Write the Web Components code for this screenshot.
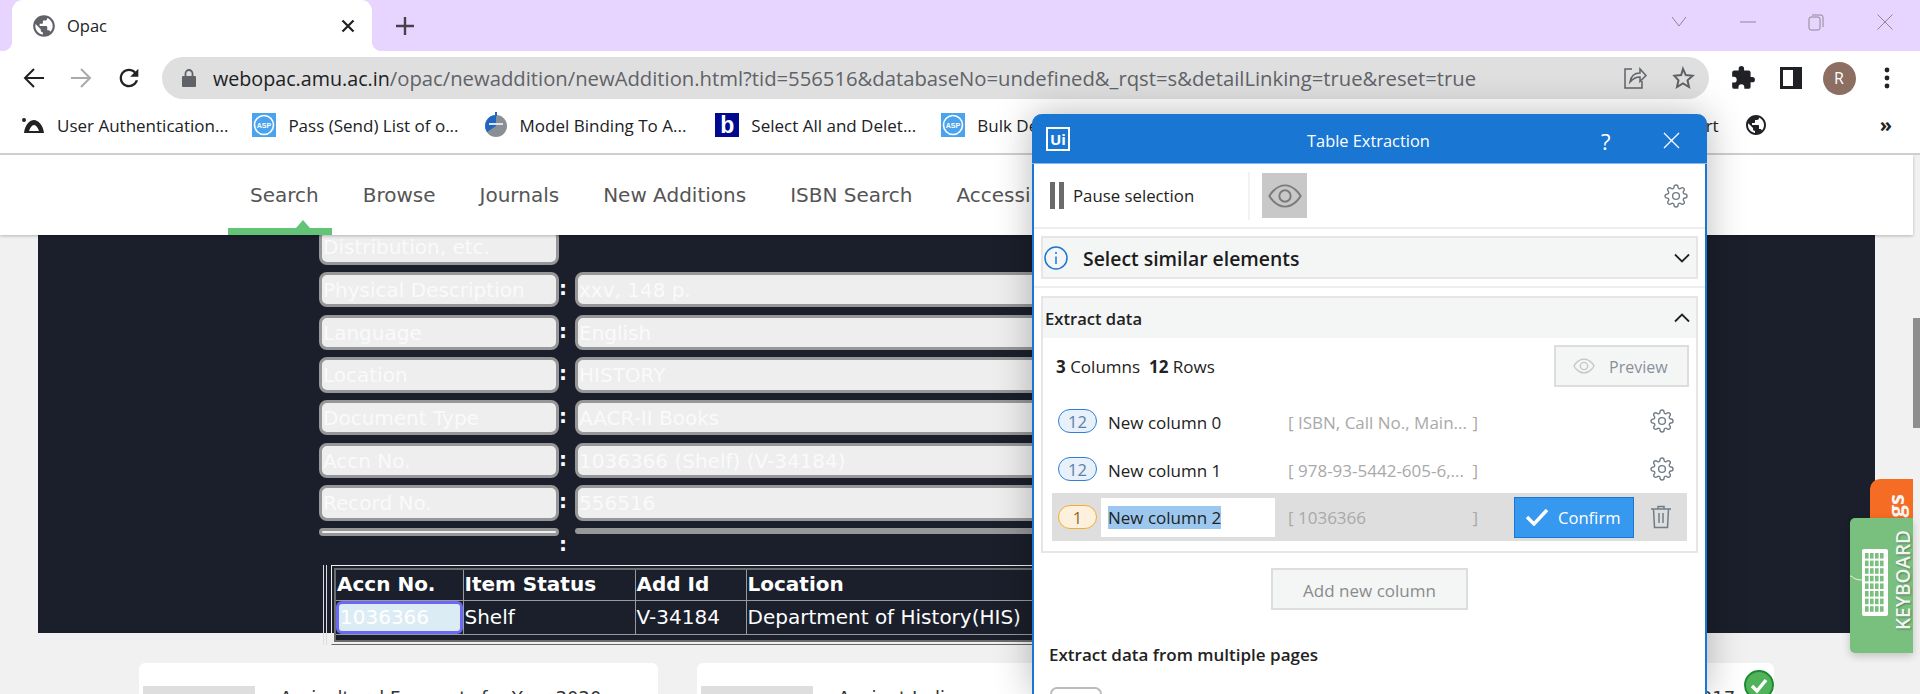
<!DOCTYPE html>
<html>
<head>
<meta charset="utf-8">
<title>Opac</title>
<style>
    html, body { margin: 0; height: 694px; overflow: hidden; background: #f1f1f1; }
    body { position: relative; font-family: "Open Sans", sans-serif; display: flex; flex-direction: column; }
</style>
</head>
<body>
<chrome-tabs></chrome-tabs>
<chrome-toolbar url-host="webopac.amu.ac.in" url-path="/opac/newaddition/newAddition.html?tid=556516&amp;databaseNo=undefined&amp;_rqst=s&amp;detailLinking=true&amp;reset=true"></chrome-toolbar>
<chrome-bookmarks></chrome-bookmarks>
<page-area>
    <site-nav></site-nav>
    <record-block>
        <record-row label="Distribution, etc." blank></record-row>
        <record-row label="Physical Description">xxv, 148 p.</record-row>
        <record-row label="Language">English</record-row>
        <record-row label="Location">HISTORY</record-row>
        <record-row label="Document Type">AACR-II Books</record-row>
        <record-row label="Accn No.">1036366 (Shelf) (V-34184)</record-row>
        <record-row label="Record No.">556516</record-row>
        <record-row thin></record-row>
        <holdings-table></holdings-table>
    </record-block>
    <card-grid>
        <book-card>Agricultural Forecasts for Year 2020</book-card>
        <book-card>Ancient India</book-card>
        <book-card checked>Modern India History &amp; Cultures 2017</book-card>
    </card-grid>
</page-area>
<side-tabs></side-tabs>
<table-extraction>
    <column-row count="12" preview="ISBN, Call No., Main...">New column 0</column-row>
    <column-row count="12" preview="978-93-5442-605-6,...">New column 1</column-row>
    <column-row count="1" preview="1036366" editing>New column 2</column-row>
</table-extraction>

<script>
const GLOBE = 'M12 2C6.48 2 2 6.48 2 12s4.48 10 10 10 10-4.48 10-10S17.52 2 12 2zm-1 17.93c-3.95-.49-7-3.85-7-7.93 0-.62.08-1.21.21-1.79L9 15v1c0 1.1.9 2 2 2v1.93zm6.9-2.54c-.26-.81-1-1.39-1.9-1.39h-1v-3c0-.55-.45-1-1-1H8v-2h2c.55 0 1-.45 1-1V7h2c1.1 0 2-.9 2-2v-.41c2.93 1.19 5 4.06 5 7.41 0 2.08-.8 3.97-2.1 5.39z';
const GEAR = `<svg width="24" height="24" viewBox="0 0 24 24" fill="none" stroke="#6f7b86" stroke-width="1.4"><circle cx="12" cy="12" r="3.4"/><path d="M19.4 15a1.65 1.65 0 0 0 .33 1.82l.06.06a2 2 0 0 1 0 2.83 2 2 0 0 1-2.83 0l-.06-.06a1.65 1.65 0 0 0-1.82-.33 1.65 1.65 0 0 0-1 1.51V21a2 2 0 0 1-2 2 2 2 0 0 1-2-2v-.09A1.65 1.65 0 0 0 9 19.4a1.65 1.65 0 0 0-1.82.33l-.06.06a2 2 0 0 1-2.83 0 2 2 0 0 1 0-2.83l.06-.06a1.65 1.65 0 0 0 .33-1.82 1.65 1.65 0 0 0-1.51-1H3a2 2 0 0 1-2-2 2 2 0 0 1 2-2h.09A1.65 1.65 0 0 0 4.6 9a1.65 1.65 0 0 0-.33-1.82l-.06-.06a2 2 0 0 1 0-2.83 2 2 0 0 1 2.83 0l.06.06a1.65 1.65 0 0 0 1.82.33H9a1.65 1.65 0 0 0 1-1.51V3a2 2 0 0 1 2-2 2 2 0 0 1 2 2v.09a1.65 1.65 0 0 0 1 1.51 1.65 1.65 0 0 0 1.82-.33l.06-.06a2 2 0 0 1 2.83 0 2 2 0 0 1 0 2.83l-.06.06a1.65 1.65 0 0 0-.33 1.82V9a1.65 1.65 0 0 0 1.51 1H21a2 2 0 0 1 2 2 2 2 0 0 1-2 2h-.09a1.65 1.65 0 0 0-1.51 1z"/></svg>`;
const eye = (w, color, sw) => `<svg width="${w}" height="${w}" viewBox="0 0 24 24" fill="none" stroke="${color}" stroke-width="${sw}"><path d="M1 12s4-7.5 11-7.5S23 12 23 12s-4 7.5-11 7.5S1 12 1 12z"/><circle cx="12" cy="12" r="4"/></svg>`;
const aspIcon = `<svg width="24" height="24" viewBox="0 0 24 24"><rect width="24" height="24" fill="#4aa3ec"/><circle cx="12" cy="12" r="9.500" fill="none" stroke="#fff" stroke-width="1.600"/><text x="12" y="14.500" font-family="Liberation Sans" font-size="7" font-weight="700" fill="#fff" text-anchor="middle">ASP</text></svg>`;

class ChromeTabs extends HTMLElement {
    constructor() {
        super();
        this.attachShadow({mode: 'open'});
        this.shadowRoot.innerHTML = `
        <style>
            :host { display: flex; height: 51px; background: #e8d5ff; padding-left: 12px; flex: none; }
            .tab { position: relative; width: 360px; background: #fff; border-radius: 11px 11px 0 0; display: flex; align-items: center; padding: 0 16px 0 19px; box-sizing: border-box; color: #202124; font-size: 16.5px; }
            .tab::before, .tab::after { content: ''; position: absolute; bottom: 0; width: 10px; height: 10px; }
            .tab::before { left: -10px; background: radial-gradient(circle at 0 0, transparent 10px, #fff 10.5px); }
            .tab::after { right: -10px; background: radial-gradient(circle at 100% 0, transparent 10px, #fff 10.5px); }
            .fav { margin-right: 10px; }
            .name { flex: 1; }
            .plus { margin-left: 23px; align-self: center; }
            .controls { margin-left: auto; display: flex; height: 44px; padding-right: 1px; }
            .controls span { width: 68.5px; display: flex; align-items: center; justify-content: center; }
        </style>
        <div class="tab">
            <svg class="fav" width="26" height="26" viewBox="0 0 24 24" fill="#5f6368"><path d="${GLOBE}"/></svg>
            <span class="name">Opac</span>
            <svg width="16" height="16" viewBox="0 0 16 16" stroke="#202124" stroke-width="2.2"><path d="M2.5 2.5l11 11M13.5 2.5l-11 11"/></svg>
        </div>
        <svg class="plus" width="20" height="20" viewBox="0 0 20 20" stroke="#46424d" stroke-width="2.4"><path d="M10 1v18M1 10h18"/></svg>
        <div class="controls">
            <span><svg width="18" height="12" viewBox="0 0 18 12" fill="none" stroke="#8d8794"><path d="M2 1l7 9 7-9"/></svg></span>
            <span><svg width="18" height="12" viewBox="0 0 18 12" stroke="#8d8794"><path d="M1 6h16"/></svg></span>
            <span><svg width="18" height="18" viewBox="0 0 18 18" fill="none" stroke="#8d8794"><rect x="2" y="4" width="11" height="13" rx="2"/><path d="M5 2h9a2 2 0 0 1 2 2v10"/></svg></span>
            <span><svg width="18" height="18" viewBox="0 0 18 18" stroke="#8d8794"><path d="M1.5 1.5l15 15M16.5 1.5l-15 15"/></svg></span>
        </div>`;
    }
}
customElements.define('chrome-tabs', ChromeTabs);

class ChromeToolbar extends HTMLElement {
    constructor() {
        super();
        this.attachShadow({mode: 'open'});
    }

    connectedCallback() {
        const host = this.getAttribute('url-host');
        const path = this.getAttribute('url-path').replace(/&/g, '&amp;');
        this.shadowRoot.innerHTML = `
        <style>
            :host { display: flex; height: 51px; background: #fff; padding: 6px 9px 3px 10px; box-sizing: border-box; align-items: stretch; flex: none; }
            .btn { display: flex; align-items: center; justify-content: center; }
            .nav { width: 47px; }
            .nav.reload { padding-left: 1px; }
            .omni { margin-left: 10px; width: 1547px; border-radius: 21px; background: #dfdfdf; display: flex; align-items: center; padding: 0 14px 0 18px; box-sizing: border-box; margin-right: 10px; }
            .url { margin-left: 15px; flex: 1; font-size: 20.26px; color: #5f6368; white-space: nowrap; }
            .url b { font-weight: 400; color: #202124; font-size: 19.7px; }
            .tool { width: 48px; }
            .avatar { width: 33px; height: 33px; border-radius: 50%; background: #8d6e63; color: #fff; font-size: 16px; display: flex; align-items: center; justify-content: center; }
        </style>
        <span class="btn nav"><svg width="24" height="24" viewBox="0 0 24 24" fill="none" stroke="#202124" stroke-width="2"><path d="M22 12H3M12 3l-9 9 9 9"/></svg></span>
        <span class="btn nav"><svg width="24" height="24" viewBox="0 0 24 24" fill="none" stroke="#aaa" stroke-width="2"><path d="M2 12h19M12 3l9 9-9 9"/></svg></span>
        <span class="btn nav reload"><svg width="28" height="28" viewBox="0 0 24 24" fill="#202124"><path d="M17.65 6.35C16.2 4.9 14.21 4 12 4c-4.42 0-7.99 3.58-7.99 8s3.57 8 7.99 8c3.73 0 6.84-2.55 7.73-6h-2.08c-.82 2.33-3.04 4-5.65 4-3.31 0-6-2.69-6-6s2.69-6 6-6c1.66 0 3.14.69 4.22 1.78L13 11h7V4l-2.35 2.35z"/></svg></span>
        <div class="omni">
            <svg width="18" height="20" viewBox="0 0 18 20" fill="#5f6368"><path d="M3 8h12a1 1 0 0 1 1 1v9a1 1 0 0 1-1 1H3a1 1 0 0 1-1-1V9a1 1 0 0 1 1-1z"/><path d="M5.5 8V5.5a3.5 3.5 0 0 1 7 0V8" fill="none" stroke="#5f6368" stroke-width="1.8"/></svg>
            <span class="url"><b>${host}</b>${path}</span>
            <svg style="margin-right:24px" width="24" height="24" viewBox="0 0 24 24" fill="none" stroke="#5f6368" stroke-width="1.5"><path d="M9 3H2v19h17v-7"/><path d="M7 16c1-6 5-9 10-9V3l6 6.5-6 6V11c-4 0-7 1.500-10 5z"/></svg>
            <svg width="24" height="24" viewBox="0 0 24 24" fill="none" stroke="#5f6368" stroke-width="2"><path d="M12 2.800l2.800 6.300 6.800.7-5.100 4.500 1.500 6.700-6-3.500-6 3.500 1.500-6.700L3.400 9.800l6.800-.7z"/></svg>
        </div>
        <span class="btn tool"><svg width="26" height="26" viewBox="0 0 24 24" fill="#202124"><path d="M20.500 11H19V7a2 2 0 0 0-2-2h-4V3.500a2.500 2.500 0 0 0-5 0V5H4a2 2 0 0 0-2 2v3.800h1.500a2.700 2.700 0 0 1 0 5.400H2V20a2 2 0 0 0 2 2h3.800v-1.500a2.700 2.700 0 0 1 5.400 0V22H17a2 2 0 0 0 2-2v-4h1.500a2.500 2.500 0 0 0 0-5z"/></svg></span>
        <span class="btn tool"><svg width="22" height="22" viewBox="0 0 22 22"><rect width="22" height="22" fill="#202124"/><rect x="3" y="3" width="10" height="16" fill="#fff"/></svg></span>
        <span class="btn tool"><span class="avatar">R</span></span>
        <span class="btn tool"><svg width="8" height="24" viewBox="0 0 8 24" fill="#202124"><circle cx="4" cy="4" r="2.400"/><circle cx="4" cy="12" r="2.400"/><circle cx="4" cy="20" r="2.400"/></svg></span>`;
    }
}
customElements.define('chrome-toolbar', ChromeToolbar);

class ChromeBookmarks extends HTMLElement {
    constructor() {
        super();
        this.attachShadow({mode: 'open'});
        this.shadowRoot.innerHTML = `
        <style>
            :host { display: flex; height: 53px; background: #fff; border-bottom: 2px solid #cfcfcf; box-sizing: border-box; align-items: center; padding: 0 28px 5px 21px; flex: none; font-size: 17px; color: #202124; white-space: nowrap; }
            .item { display: flex; align-items: center; gap: 12px; margin-right: 25px; }
            .item.a { margin-right: 24px; }
            .item.c { margin-right: 29px; }
            .b { width: 24px; height: 24px; background: #000a8f; color: #fff; font: 700 23px/24px "Liberation Sans", sans-serif; text-align: center; }
            .right { margin-left: auto; display: flex; align-items: center; }
            .more { margin-left: 112px; font-size: 20px; font-weight: 700; line-height: 20px; }
        </style>
        <span class="item a"><svg width="24" height="20" viewBox="0 0 24 20"><path d="M3 18C4 9 9 5 13 5s9 5 10 13z" fill="#222"/><path d="M8 16c1-3 3-6 5-6s4 3 5 6z" fill="#fff"/><circle cx="3" cy="5" r="2" fill="#222"/></svg>User Authentication...</span>
        <span class="item">${aspIcon}Pass (Send) List of o...</span>
        <span class="item c"><svg width="24" height="26" viewBox="0 0 24 26"><circle cx="12" cy="14" r="11" fill="#8a8f96"/><path d="M12 3a11 11 0 0 0-9 17l9-6z" fill="#1f66c4"/><path d="M5 12h14" stroke="#dfe3e8" stroke-width="2"/><path d="M12 0v4" stroke="#1f66c4" stroke-width="2"/></svg>Model Binding To A...</span>
        <span class="item"><span class="b">b</span>Select All and Delet...</span>
        <span class="item">${aspIcon}Bulk De</span>
        <span class="right">
            <span>rt</span>
            <svg style="margin-left:25px" width="24" height="24" viewBox="0 0 24 24" fill="#202124"><path d="${GLOBE}"/></svg>
            <span class="more">»</span>
        </span>`;
    }
}
customElements.define('chrome-bookmarks', ChromeBookmarks);

class PageArea extends HTMLElement {
    constructor() {
        super();
        this.attachShadow({mode: 'open'});
        this.shadowRoot.innerHTML = `
        <style>
            :host { display: flex; flex: 1; min-height: 0; background: #f1f1f1; overflow: hidden; }
            .main { width: 1913px; flex: none; }
            .bar { flex: 1; display: flex; flex-direction: column; }
            .thumb { margin-top: 163px; height: 110px; background: #8e8e8e; }
        </style>
        <div class="main"><slot></slot></div>
        <div class="bar"><div class="thumb"></div></div>`;
    }
}
customElements.define('page-area', PageArea);

class SiteNav extends HTMLElement {
    constructor() {
        super();
        this.attachShadow({mode: 'open'});
        this.shadowRoot.innerHTML = `
        <style>
            :host { display: flex; position: relative; z-index: 2; height: 80px; background: #fff; box-shadow: 0 1px 3px rgba(0,0,0,.25); align-items: center; gap: 44px; padding-left: 250px; box-sizing: border-box; font: 20px "DejaVu Sans", sans-serif; color: #555; white-space: nowrap; }
            a { position: relative; }
            a.on::before { content: ''; position: absolute; left: -22px; top: 45px; width: 104px; height: 7px; background: #63c477; }
            a.on::after { content: ''; position: absolute; left: 46px; top: 37px; border: 7px solid transparent; border-top: 0; border-bottom: 8px solid #63c477; }
        </style>
        <a class="on">Search</a><a>Browse</a><a>Journals</a><a>New Additions</a><a>ISBN Search</a><a>Accessi</a>`;
    }
}
customElements.define('site-nav', SiteNav);

class RecordBlock extends HTMLElement {
    constructor() {
        super();
        this.attachShadow({mode: 'open'});
        this.shadowRoot.innerHTML = `
        <style>
            :host { display: block; height: 398px; margin-left: 38px; width: 1837px; background: #1a1f2b; }
            :host::before { content: ''; display: table; }
            .list { display: flex; flex-direction: column; gap: 7.33px; margin: -5.67px 0 0 281px; width: 800px; }
        </style>
        <div class="list"><slot></slot></div>`;
    }
}
customElements.define('record-block', RecordBlock);

class RecordRow extends HTMLElement {
    constructor() {
        super();
        this.attachShadow({mode: 'open'});
    }

    connectedCallback() {
        const blank = this.hasAttribute('blank');
        this.shadowRoot.innerHTML = `
        <style>
            :host { display: grid; grid-template-columns: 240px 16px 1fr; font: 20px "DejaVu Sans", sans-serif; color: #fafafa; align-items: start; }
            .box { height: 35.33px; box-sizing: border-box; border: 3px solid #979797; border-radius: 8px; background: #eee; padding-left: 1px; line-height: 31px; white-space: nowrap; overflow: hidden; }
            .colon { text-align: center; color: #fff; font-weight: 700; line-height: 33px; padding-right: 8px; }
            :host([thin]) .box { height: 8px; border-radius: 4px; }
            :host([thin]) .value { height: 6px; background: #979797; border: 0; }
            :host([thin]) .colon { height: 24px; margin-top: 4px; line-height: 24px; }
        </style>
        <div class="box">${this.getAttribute('label') || ''}</div>
        <div class="colon">${blank ? '' : ':'}</div>
        ${blank ? '' : '<div class="box value"><slot></slot></div>'}`;
    }
}
customElements.define('record-row', RecordRow);

class HoldingsTable extends HTMLElement {
    constructor() {
        super();
        this.attachShadow({mode: 'open'});
        this.shadowRoot.innerHTML = `
        <style>
            :host { display: flex; margin: 1.500px 0 0 4px; font: 20px "DejaVu Sans", sans-serif; color: #fff; }
            .bar { width: 4px; height: 80px; box-sizing: border-box; border-left: 1px solid #ddd; border-right: 1px solid #ddd; margin-right: 4px; }
            .outer { height: 80px; box-sizing: border-box; border: 1px solid #eee; border-bottom-color: #666; border-right: 0; padding: 2px 0 2px 2px; flex: 1; }
            .inner { height: 100%; box-sizing: border-box; border: 2px solid #6c6c6c; border-right: 0; background: #1a1f2b; }
            table { border-collapse: collapse; table-layout: fixed; width: 760px; }
            td, th { border: 1px solid #9a9a9a; padding: 0 0 0 1px; text-align: left; white-space: nowrap; }
            tr:first-child td, tr:first-child th { border-top: 0; }
            td:first-child, th:first-child { border-left: 0; }
            th { height: 28px; padding-bottom: 2px; }
            td { height: 33px; }
            .sel { padding: 0; }
            .sel div { height: 33px; box-sizing: border-box; background: #dcecf5; border: 3px solid #6a68f5; border-radius: 6px; padding-left: 1px; line-height: 27px; }
        </style>
        <div class="bar"></div>
        <div class="outer"><div class="inner"><table>
            <colgroup><col style="width:127px"><col style="width:172px"><col style="width:111px"><col></colgroup>
            <tr><th>Accn No.</th><th>Item Status</th><th>Add Id</th><th>Location</th></tr>
            <tr><td class="sel"><div>1036366</div></td><td>Shelf</td><td>V-34184</td><td>Department of History(HIS)</td></tr>
        </table></div></div>`;
    }
}
customElements.define('holdings-table', HoldingsTable);

class CardGrid extends HTMLElement {
    constructor() {
        super();
        this.attachShadow({mode: 'open'});
        this.shadowRoot.innerHTML = `
        <style>
            :host { display: grid; grid-template-columns: repeat(3, 519px); gap: 39px; margin: 30px 0 0 139px; }
        </style>
        <slot></slot>`;
    }
}
customElements.define('card-grid', CardGrid);

class BookCard extends HTMLElement {
    constructor() {
        super();
        this.attachShadow({mode: 'open'});
    }

    connectedCallback() {
        const badge = this.hasAttribute('checked') ? `<svg class="badge" width="30" height="30" viewBox="0 0 30 30"><circle cx="15" cy="15" r="14" fill="#4fb35a" stroke="#1b8a32" stroke-width="2"/><path d="M8 16l5 5 9-11" fill="none" stroke="#fff" stroke-width="3.500"/></svg>` : '';
        this.shadowRoot.innerHTML = `
        <style>
            :host { display: flex; position: relative; height: 120px; background: #fff; border-radius: 6px; padding: 23px 4px; box-sizing: border-box; gap: 25px; font: 18px "DejaVu Sans", sans-serif; color: #333; white-space: nowrap; }
            .pic { width: 112px; height: 100px; background: #dedede; flex: none; }
            .title { line-height: 22px; padding-top: 1px; }
            .badge { position: absolute; right: 0; top: 7px; }
        </style>
        <div class="pic"></div>
        <div class="title"><slot></slot></div>
        ${badge}`;
    }
}
customElements.define('book-card', BookCard);

class SideTabs extends HTMLElement {
    constructor() {
        super();
        this.attachShadow({mode: 'open'});
        let keys = '';
        for (let r = 0; r < 8; r++) {
            for (let c = 0; c < 4; c++) {
                keys += `<rect x="${3 + c * 5}" y="${4 + r * 7.600}" width="3.600" height="5.600" fill="#79c07e"/>`;
            }
        }
        this.shadowRoot.innerHTML = `
        <style>
            :host { position: absolute; left: 1850px; top: 479px; width: 63px; height: 174px; display: block; z-index: 3; }
            .rate { position: absolute; right: 0; top: 0; width: 43px; height: 39px; overflow: hidden; background: #f56d24; border-radius: 10px 0 0 0; color: #f6f6f6; }
            .rate span { display: block; width: 22px; margin: 15px 0 0 14px; writing-mode: vertical-rl; transform: rotate(180deg); font: 700 22px/22px "Open Sans", sans-serif; }
            .kbd { position: absolute; left: 0; top: 39px; width: 63px; height: 135px; background: #79c07e; border-radius: 5px 0 0 5px; box-shadow: 0 3px 8px rgba(0,0,0,.2); display: flex; align-items: center; box-sizing: border-box; padding: 0 0 11px 12px; }
            .kbd svg { flex: none; margin-top: 4px; }
            .kbd span { margin-left: 5px; writing-mode: vertical-rl; transform: rotate(180deg); font: 600 19px/20px "Open Sans", sans-serif; color: #f4f4f4; text-shadow: -1px 1px 2px rgba(0,0,0,.35); }
            .kbd .cord { position: absolute; left: 0; top: 57px; margin: 0; }
        </style>
        <div class="rate"><span>gs</span></div>
        <div class="kbd">
            <svg width="26" height="67" viewBox="0 0 26 67"><rect width="26" height="67" rx="2" fill="#fff"/>${keys}</svg>
            <span>KEYBOARD</span>
            <svg class="cord" width="12" height="8" viewBox="0 0 12 8" fill="none" stroke="#e8f4e8"><path d="M0 1c3 0 3 4 12 4"/></svg>
        </div>`;
    }
}
customElements.define('side-tabs', SideTabs);

class TableExtraction extends HTMLElement {
    constructor() {
        super();
        this.attachShadow({mode: 'open'});
        this.shadowRoot.innerHTML = `
        <style>
            :host { position: absolute; left: 1032px; top: 114px; width: 675px; height: 580px; z-index: 4; background: #fff; border-radius: 10px 10px 0 0; box-shadow: 0 0 38px rgba(0,0,0,.28); display: flex; flex-direction: column; box-sizing: border-box; border: 2px solid #1976d2; border-top: 0; border-bottom: 0; font-size: 17px; color: #222; }
            header { height: 50px; box-sizing: border-box; margin: 0 -2px; background: #1976d2; border-radius: 10px 10px 0 0; display: flex; align-items: center; position: relative; color: #fff; border-bottom: 1px solid #8ab8ee; flex: none; }
            .logo { margin-left: 14px; width: 24px; height: 24px; box-sizing: border-box; border: 2px solid #fff; font: 700 15px/20px "Open Sans", sans-serif; text-align: center; }
            .title { position: absolute; left: 275px; top: 16px; font-size: 16.4px; line-height: 22px; }
            .help { position: absolute; left: 569px; top: 12px; font-size: 22px; line-height: 30px; }
            .x { position: absolute; left: 631px; top: 18px; }
            .tools { height: 65px; flex: none; display: flex; align-items: center; box-sizing: border-box; padding-left: 16px; border-bottom: 2px solid #eee; font-size: 16.8px; }
            .pause { display: flex; gap: 4px; margin-right: 9px; }
            .pause i { width: 5px; height: 27px; background: #6b6b6b; }
            .sep { margin-left: 54px; width: 2px; height: 48px; background: #f2f2f2; }
            .eye { margin-left: 12px; width: 45px; height: 45px; background: #c8c8c8; display: flex; align-items: center; justify-content: center; }
            .tools .gear { display: flex; margin-left: auto; margin-right: 17px; }
            .section { margin: 8px 7px 0; border: 2px solid #e6e6e6; flex: none; }
            .similar { height: 43px; box-sizing: border-box; background: #f4f6f6; display: flex; align-items: center; padding: 0 6px 0 1px; font-size: 19.4px; font-weight: 600; color: #1c1c1c; margin-top: 7px; }
            .similar svg:first-child { margin-right: 15px; }
            .similar span { padding-top: 2px; }
            .chev { margin-left: auto; }
            .rule { height: 2px; background: #eee; margin-top: 7px; flex: none; }
            .head { height: 40px; background: #f4f6f6; display: flex; align-items: center; padding: 0 6px 0 2px; font-weight: 600; font-size: 16.6px; }
            .head span { padding-top: 1px; }
            .stats { display: flex; align-items: center; justify-content: space-between; margin-top: 7px; height: 42px; padding: 0 7px 0 13px; }
            .stats .count { padding-top: 1px; }
            .stats b { font-weight: 700; }
            .preview { width: 135px; height: 42px; box-sizing: border-box; border: 2px solid #ddd; background: #f4f6f6; color: #8a8f99; display: flex; align-items: center; padding: 2px 0 0 17px; gap: 14px; font-size: 16px; }
            .preview svg { margin-top: -2px; }
            .rows { margin: 10px 9px 10px; }
            .add { margin: 15px auto 0; width: 197px; height: 42px; box-sizing: border-box; border: 2px solid #ddd; background: #f4f6f6; color: #8a8a8a; display: flex; align-items: center; justify-content: center; padding-top: 2px; flex: none; }
            .multi { margin: 34px 0 0 15px; font-weight: 600; line-height: 22px; flex: none; }
            .toggle { margin: 21px 0 0 16px; width: 52px; height: 26px; box-sizing: border-box; border: 2px solid #bbb; border-radius: 13px 13px 0 0; border-bottom: 0; flex: 1; max-height: 7px; }
        </style>
        <header>
            <span class="logo">Ui</span>
            <span class="title">Table Extraction</span>
            <span class="help">?</span>
            <svg class="x" width="17" height="17" viewBox="0 0 17 17" stroke="#fff" stroke-width="1.300"><path d="M1 1l15 15M16 1L1 16"/></svg>
        </header>
        <div class="tools">
            <span class="pause"><i></i><i></i></span>
            <span>Pause selection</span>
            <span class="sep"></span>
            <span class="eye">${eye(34, '#7b7b7b', 1.4)}</span>
            <span class="gear">${GEAR}</span>
        </div>
        <div class="section similar">
            <svg width="24" height="24" viewBox="0 0 24 24" fill="none" stroke="#1976d2" stroke-width="1.500"><circle cx="12" cy="12" r="11"/><path d="M12 10.500V18M12 6v2"/></svg>
            <span>Select similar elements</span>
            <svg class="chev" width="16" height="10" viewBox="0 0 16 10" fill="none" stroke="#222" stroke-width="1.800"><path d="M1 1.500l7 7 7-7"/></svg>
        </div>
        <div class="rule"></div>
        <div class="section">
            <div class="head"><span>Extract data</span>
                <svg class="chev" width="16" height="10" viewBox="0 0 16 10" fill="none" stroke="#222" stroke-width="1.800"><path d="M1 8.500l7-7 7 7"/></svg>
            </div>
            <div class="stats">
                <span class="count"><b>3</b> Columns &nbsp;<b>12</b> Rows</span>
                <span class="preview">${eye(22, '#c4c4c4', 1.4)}Preview</span>
            </div>
            <div class="rows"><slot></slot></div>
        </div>
        <div class="add">Add new column</div>
        <div class="multi">Extract data from multiple pages</div>
        <div class="toggle"></div>`;
    }
}
customElements.define('table-extraction', TableExtraction);

class ColumnRow extends HTMLElement {
    constructor() {
        super();
        this.attachShadow({mode: 'open'});
    }

    connectedCallback() {
        const editing = this.hasAttribute('editing');
        const actions = editing
            ? `<span class="confirm"><svg width="24" height="18" viewBox="0 0 24 18" fill="none" stroke="#fff" stroke-width="3.400"><path d="M2 9l7 7L22 2"/></svg>Confirm</span>
               <svg class="trash" width="22" height="24" viewBox="0 0 22 24" fill="none" stroke="#707d88" stroke-width="1.500"><path d="M1 4h20M8 4V1.500h6V4M3.500 4l1 18.500h13l1-18.500M9 8v10M13 8v10"/></svg>`
            : `<span class="gear">${GEAR}</span>`;
        this.shadowRoot.innerHTML = `
        <style>
            :host { display: grid; grid-template-columns: 39px 178px 205px 1fr; align-items: center; height: 48px; padding-left: 6px; box-sizing: border-box; font-size: 17px; color: #222; background: ${editing ? '#dedede' : 'transparent'}; }
            .badge { height: 24px; box-sizing: border-box; border: 1.500px solid #2f80d8; border-radius: 12px; background: #e8f0fa; color: #5d7fa8; display: flex; align-items: center; justify-content: center; font-size: 16.5px; }
            :host([editing]) .badge { border-color: #f5ac2a; background: #fdf1dd; color: #8d6a2e; }
            .name { margin-left: 4px; padding-left: 7px; height: 39px; display: flex; align-items: center; ${editing ? 'background:#fff;' : 'padding-top: 3px; box-sizing: border-box;'} white-space: nowrap; }
            .name span { ${editing ? 'background:#9cc8f0;' : ''} line-height: 23px; }
            .value { margin-left: 13px; margin-right: 2px; display: flex; justify-content: space-between; color: #a9a9a9; white-space: nowrap; ${editing ? '' : 'padding-top: 3px;'} }
            .actions { display: flex; align-items: center; justify-content: flex-end; padding-right: 13px; }
            .gear { display: flex; }
            .confirm { width: 120px; height: 41px; box-sizing: border-box; background: #3698ee; border: 1px solid #1976d2; color: #fff; display: flex; align-items: center; padding-left: 10px; gap: 9px; margin-right: 16px; font-size: 16.6px; }
            .trash { margin-right: 2px; }
        </style>
        <span class="badge">${this.getAttribute('count')}</span>
        <span class="name"><span><slot></slot></span></span>
        <span class="value"><span>[ ${this.getAttribute('preview')}</span><span>]</span></span>
        <span class="actions">${actions}</span>`;
    }
}
customElements.define('column-row', ColumnRow);
</script>
</body>
</html>
